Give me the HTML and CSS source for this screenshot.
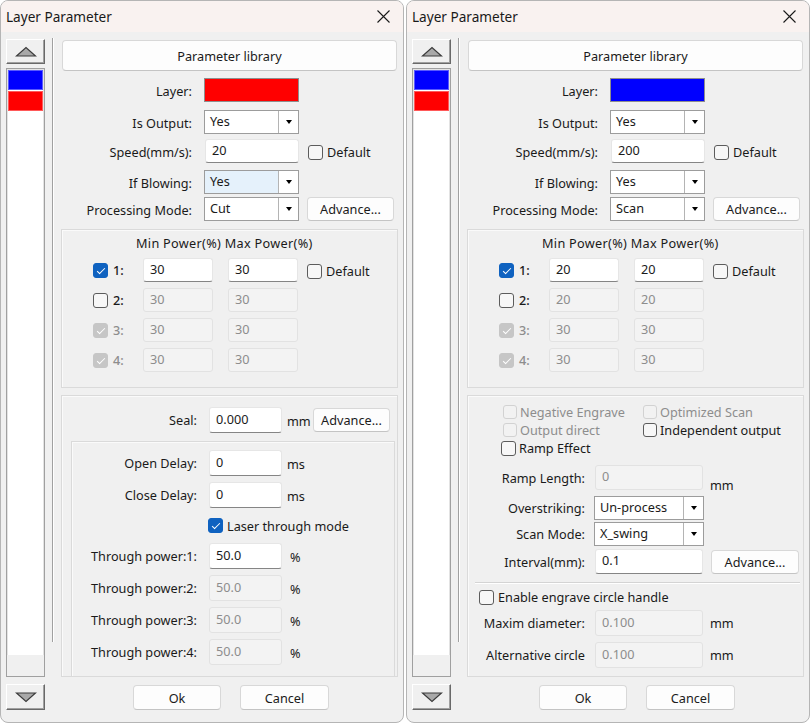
FILE: index.html
```html
<!DOCTYPE html>
<html>
<head>
  <title>Layer Parameter</title>
<link rel="stylesheet" href="styles.css"></head>
<body>
<div class="screen">

  <!-- Layer 2 : Cut -->
  <div class="window">
    <div class="titlebar">
      <span>Layer Parameter</span>
      <svg class="close" width="13" height="13" viewBox="0 0 13 13"><path d="M0.5 0.5L12.5 12.5M12.5 0.5L0.5 12.5" stroke="#1a1a1a" stroke-width="1.1"/></svg>
    </div>
    <div class="wbody">
      <div class="layers">
        <button class="arrow-btn"><svg width="22" height="11" viewBox="0 0 22 11"><polygon points="1.5,10 11,1.5 20.5,10" fill="#a9a9a9" stroke="#3c3c3c" stroke-width="1.2"/></svg></button>
        <div class="layer-list">
          <div class="layer-item blue"></div>
          <div class="layer-item red"></div>
          <div class="list-space"></div>
          <div class="list-foot"></div>
        </div>
        <button class="arrow-btn down"><svg width="22" height="11" viewBox="0 0 22 11"><polygon points="1.5,1 11,9.5 20.5,1" fill="#a9a9a9" stroke="#3c3c3c" stroke-width="1.2"/></svg></button>
      </div>
      <div class="splitter"></div>
      <div class="main">
        <button class="btn lib">Parameter library</button>
        <div class="form">
          <div class="row"><span class="lbl">Layer:</span><span class="swatch red"></span></div>
          <div class="row"><span class="lbl">Is Output:</span><div class="combo"><span class="val">Yes</span><span class="drop"></span></div></div>
          <div class="row"><span class="lbl">Speed(mm/s):</span><input class="field speed" value="20"><label class="check extra"><span class="cb"></span>Default</label></div>
          <div class="row"><span class="lbl">If Blowing:</span><div class="combo hot"><span class="val">Yes</span><span class="drop"></span></div></div>
          <div class="row"><span class="lbl">Processing Mode:</span><div class="combo"><span class="val">Cut</span><span class="drop"></span></div><button class="btn adv">Advance...</button></div>
        </div>

        <div class="group power">
          <div class="power-head">Min Power(%) Max Power(%)</div>
          <div class="power-row"><label class="check num"><span class="cb on"></span>1:</label><input class="field pw" value="30"><input class="field pw" value="30"><label class="check extra"><span class="cb"></span>Default</label></div>
          <div class="power-row"><label class="check num"><span class="cb"></span>2:</label><input class="field pw" value="30" disabled><input class="field pw" value="30" disabled></div>
          <div class="power-row"><label class="check num off"><span class="cb on"></span>3:</label><input class="field pw" value="30" disabled><input class="field pw" value="30" disabled></div>
          <div class="power-row"><label class="check num off"><span class="cb on"></span>4:</label><input class="field pw" value="30" disabled><input class="field pw" value="30" disabled></div>
        </div>

        <div class="group lower">
          <div class="seal-row"><span class="lbl">Seal:</span><input class="field" value="0.000"><span class="unit">mm</span><button class="btn adv2">Advance...</button></div>
          <div class="inner">
            <div class="drow"><span class="lbl">Open Delay:</span><input class="field" value="0"><span class="unit">ms</span></div>
            <div class="drow"><span class="lbl">Close Delay:</span><input class="field" value="0"><span class="unit">ms</span></div>
            <div class="drow cbrow"><label class="check"><span class="cb on"></span>Laser through mode</label></div>
            <div class="drow"><span class="lbl">Through power:1:</span><input class="field" value="50.0"><span class="unit pct">%</span></div>
            <div class="drow"><span class="lbl">Through power:2:</span><input class="field" value="50.0" disabled><span class="unit pct">%</span></div>
            <div class="drow"><span class="lbl">Through power:3:</span><input class="field" value="50.0" disabled><span class="unit pct">%</span></div>
            <div class="drow"><span class="lbl">Through power:4:</span><input class="field" value="50.0" disabled><span class="unit pct">%</span></div>
          </div>
        </div>

        <div class="footer"><button class="btn ok">Ok</button><button class="btn ok">Cancel</button></div>
      </div>
    </div>
  </div>

  <!-- Layer 1 : Scan -->
  <div class="window">
    <div class="titlebar">
      <span>Layer Parameter</span>
      <svg class="close" width="13" height="13" viewBox="0 0 13 13"><path d="M0.5 0.5L12.5 12.5M12.5 0.5L0.5 12.5" stroke="#1a1a1a" stroke-width="1.1"/></svg>
    </div>
    <div class="wbody">
      <div class="layers">
        <button class="arrow-btn"><svg width="22" height="11" viewBox="0 0 22 11"><polygon points="1.5,10 11,1.5 20.5,10" fill="#a9a9a9" stroke="#3c3c3c" stroke-width="1.2"/></svg></button>
        <div class="layer-list">
          <div class="layer-item blue"></div>
          <div class="layer-item red"></div>
          <div class="list-space"></div>
          <div class="list-foot"></div>
        </div>
        <button class="arrow-btn down"><svg width="22" height="11" viewBox="0 0 22 11"><polygon points="1.5,1 11,9.5 20.5,1" fill="#a9a9a9" stroke="#3c3c3c" stroke-width="1.2"/></svg></button>
      </div>
      <div class="splitter"></div>
      <div class="main">
        <button class="btn lib">Parameter library</button>
        <div class="form">
          <div class="row"><span class="lbl">Layer:</span><span class="swatch blue"></span></div>
          <div class="row"><span class="lbl">Is Output:</span><div class="combo"><span class="val">Yes</span><span class="drop"></span></div></div>
          <div class="row"><span class="lbl">Speed(mm/s):</span><input class="field speed" value="200"><label class="check extra"><span class="cb"></span>Default</label></div>
          <div class="row"><span class="lbl">If Blowing:</span><div class="combo"><span class="val">Yes</span><span class="drop"></span></div></div>
          <div class="row"><span class="lbl">Processing Mode:</span><div class="combo"><span class="val">Scan</span><span class="drop"></span></div><button class="btn adv">Advance...</button></div>
        </div>

        <div class="group power">
          <div class="power-head">Min Power(%) Max Power(%)</div>
          <div class="power-row"><label class="check num"><span class="cb on"></span>1:</label><input class="field pw" value="20"><input class="field pw" value="20"><label class="check extra"><span class="cb"></span>Default</label></div>
          <div class="power-row"><label class="check num"><span class="cb"></span>2:</label><input class="field pw" value="20" disabled><input class="field pw" value="20" disabled></div>
          <div class="power-row"><label class="check num off"><span class="cb on"></span>3:</label><input class="field pw" value="30" disabled><input class="field pw" value="30" disabled></div>
          <div class="power-row"><label class="check num off"><span class="cb on"></span>4:</label><input class="field pw" value="30" disabled><input class="field pw" value="30" disabled></div>
        </div>

        <div class="group lower">
          <div class="opts">
            <label class="check off"><span class="cb"></span>Negative Engrave</label>
            <label class="check off"><span class="cb"></span>Optimized Scan</label>
            <label class="check off"><span class="cb"></span>Output direct</label>
            <label class="check"><span class="cb"></span>Independent output</label>
            <label class="check ramp"><span class="cb"></span>Ramp Effect</label>
          </div>
          <div class="srow ramp-row"><span class="lbl">Ramp Length:</span><input class="field sf" value="0" disabled><span class="unit low">mm</span></div>
          <div class="srow combo-row"><span class="lbl">Overstriking:</span><div class="combo sc"><span class="val">Un-process</span><span class="drop"></span></div></div>
          <div class="srow combo-row tight"><span class="lbl">Scan Mode:</span><div class="combo sc"><span class="val">X_swing</span><span class="drop"></span></div></div>
          <div class="srow interval-row"><span class="lbl">Interval(mm):</span><input class="field sf" value="0.1"><button class="btn adv3">Advance...</button></div>
          <div class="sep"></div>
          <label class="check circle"><span class="cb"></span>Enable engrave circle handle</label>
          <div class="srow circle-row"><span class="lbl">Maxim diameter:</span><input class="field sf" value="0.100" disabled><span class="unit">mm</span></div>
          <div class="srow circle-row wide-gap"><span class="lbl">Alternative circle</span><input class="field sf" value="0.100" disabled><span class="unit">mm</span></div>
        </div>

        <div class="footer"><button class="btn ok">Ok</button><button class="btn ok">Cancel</button></div>
      </div>
    </div>
  </div>

</div>
</body>
</html>
```

FILE: styles.css
```css
* {
  box-sizing: border-box;
}

body {
  margin: 0;
  background: #fff;
  font-family: "Noto Sans", "Open Sans", sans-serif;
  font-size: 12.7px;
  color: #1a1a1a;
}

.screen {
  display: flex;
  gap: 2px;
  width: 811px;
  height: 725px;
}

.window {
  width: 404px;
  height: 723px;
  flex: none;
  display: flex;
  flex-direction: column;
  background: #f0f0f0;
  border: 1px solid #b5b5b5;
  border-radius: 8px;
  overflow: hidden;
}

.titlebar {
  height: 31px;
  flex: none;
  display: flex;
  align-items: center;
  justify-content: space-between;
  padding: 0 13px 0 5px;
  background: #f9f2f0;
  font-size: 13.6px;
}

.wbody {
  flex: 1;
  display: flex;
}

/* layer list column */
.layers {
  width: 39px;
  margin-left: 5px;
  padding-top: 7px;
  display: flex;
  flex-direction: column;
}

.arrow-btn {
  height: 25px;
  padding: 0;
  display: flex;
  align-items: center;
  justify-content: center;
  background: #f0f0f0;
  border: 1px solid;
  border-color: #fff #696969 #696969 #fff;
  box-shadow: inset -1px -1px 0 #a0a0a0;
}

.arrow-btn.down {
  height: 26px;
  margin-top: 7px;
}

.layer-list {
  height: 609px;
  margin-top: 4px;
  display: flex;
  flex-direction: column;
  background: #fff;
  border: 1px solid #a0a0a0;
  box-shadow: inset 1px 1px 0 #e3e3e3, inset -1px -1px 0 #e3e3e3;
  padding: 1px 1px 0 1px;
}

.layer-item {
  height: 20px;
  margin-bottom: 1px;
  border: 1px solid rgba(255, 255, 255, 0.35);
}

.layer-item.blue { background: #0000ff; }
.layer-item.red { background: #ff0000; }

.list-space {
  flex: 1;
}

.list-foot {
  height: 21px;
  margin: 0 -1px;
  background: #f0f0f0;
}

.splitter {
  width: 2px;
  height: 604px;
  margin: 6px 0 0 7px;
  border-left: 1px solid #a0a0a0;
  border-right: 1px solid #fff;
}

/* main column */
.main {
  width: 337px;
  margin-left: 7px;
  display: flex;
  flex-direction: column;
}

.btn {
  font: inherit;
  color: #1b1b1b;
  background: #fdfdfd;
  border: 1px solid #d8d8d8;
  border-bottom-color: #c4c4c4;
  border-radius: 4px;
  padding: 0;
}

.lib {
  height: 31px;
  margin: 8px 1px 0 1px;
}

.form {
  margin-top: 7px;
}

.row {
  display: flex;
  align-items: center;
  height: 24px;
}

.row:nth-child(1) { margin-bottom: 8px; }
.row:nth-child(2) { margin-bottom: 5px; }
.row:nth-child(3) { margin-bottom: 7px; }
.row:nth-child(4) { margin-bottom: 3px; }

.lbl {
  text-align: right;
  white-space: nowrap;
}

.row .lbl {
  width: 131px;
  margin-right: 12px;
  padding-top: 2px;
}

.swatch {
  width: 95px;
  height: 24px;
  border: 1px solid #8e8e8e;
}

.swatch.red { background: #ff0000; }
.swatch.blue { background: #0000ff; }

.combo {
  width: 95px;
  height: 24px;
  display: flex;
  background: #fff;
  border: 1px solid #9c9c9c;
}

.combo .val {
  flex: 1;
  padding-left: 5px;
  line-height: 21px;
}

.combo.hot .val {
  background: #e5f1fb;
}

.combo .drop {
  width: 20px;
  border-left: 1px solid #b4b4b4;
  display: flex;
  align-items: center;
  justify-content: center;
}

.combo .drop::after {
  content: "";
  border-top: 4px solid #000;
  border-left: 3.5px solid transparent;
  border-right: 3.5px solid transparent;
}

.field {
  width: 73px;
  height: 26px;
  font: inherit;
  color: #1b1b1b;
  background: #fff;
  border: 1px solid #e6e6e6;
  border-bottom-color: #858585;
  border-radius: 3px;
  padding: 0 6px 3px;
  outline: none;
}

.field:disabled {
  background: #f3f3f3;
  border-color: #e2e2e2;
  color: #8d8d8d;
}

.field.speed {
  width: 94px;
  height: 24px;
  margin-left: 1px;
}

.check {
  display: flex;
  align-items: center;
  white-space: nowrap;
}

.cb {
  position: relative;
  width: 15px;
  height: 15px;
  flex: none;
  margin-right: 4px;
  background: #f7f7f7;
  border: 1px solid #5c5c5c;
  border-radius: 3px;
}

.cb.on {
  background: #0f62c0;
  border-color: #0f62c0;
}

.cb.on::after {
  content: "";
  position: absolute;
  left: 4.5px;
  top: 2px;
  width: 3px;
  height: 7px;
  border: solid #fff;
  border-width: 0 1.2px 1.2px 0;
  transform: rotate(45deg);
}

.check.off {
  color: #8d8d8d;
}

.check.off .cb {
  background: #f2f2f2;
  border-color: #d2d2d2;
}

.check.off .cb.on {
  background: #c6c6c6;
  border-color: #c6c6c6;
}

.extra {
  margin-left: 9px;
  padding-top: 2px;
}

.adv {
  width: 87px;
  height: 24px;
  margin-left: 8px;
}

/* group boxes */
.group {
  border: 1px solid #dadada;
  box-shadow: inset 1px 1px 0 #fafafa;
}

.power {
  height: 159px;
  margin-top: 8px;
  padding: 5px 0 0 31px;
}

.power-head {
  line-height: 16px;
  margin: 0 0 7px 43px;
  letter-spacing: 0.3px;
}

.power-row {
  display: flex;
  align-items: center;
  height: 24px;
  margin-bottom: 6px;
}

.check.num {
  width: 50px;
  font-weight: 500;
}

.check.num .cb {
  margin-right: 5px;
}

.field.pw {
  width: 70px;
  height: 24px;
  margin-right: 15px;
}

.power-row .field.pw + .field.pw {
  margin-right: 0;
}

.lower {
  height: 282px;
  margin-top: 7px;
  display: flex;
  flex-direction: column;
}

.seal-row {
  display: flex;
  align-items: center;
  height: 26px;
  margin-top: 11px;
}

.seal-row .lbl {
  width: 135px;
  margin-right: 12px;
}

.unit {
  margin-left: 5px;
  padding-top: 2px;
}

.seal-row .unit {
  width: 20px;
}

.adv2 {
  width: 77px;
  height: 24px;
  margin-left: 6px;
}

.inner {
  flex: 1;
  margin: 8px 2px 0 9px;
  padding-top: 8px;
  border: 1px solid #dadada;
  border-bottom: none;
  box-shadow: inset 1px 1px 0 #fafafa;
}

.drow {
  display: flex;
  align-items: center;
  height: 26px;
  margin-bottom: 6px;
}

.drow .lbl {
  width: 125px;
  margin-right: 12px;
}

.drow.cbrow {
  height: 23px;
  padding-left: 136px;
}

.unit.pct {
  margin-left: 8px;
}

/* scan options */
.opts {
  display: grid;
  grid-template-columns: 140px auto;
  grid-auto-rows: 18px;
  padding: 7px 0 0 35px;
}

.opts .check {
  line-height: 18px;
}

.opts .cb {
  width: 14px;
  height: 14px;
  margin-right: 3px;
}

.check.ramp {
  margin-left: -2px;
}

.check.ramp .cb {
  width: 15px;
  height: 15px;
}

.srow {
  display: flex;
  align-items: center;
}

.srow .lbl {
  width: 117px;
  margin-right: 9px;
}

.field.sf {
  width: 108px;
  margin-left: 1px;
}

.ramp-row {
  height: 25px;
  margin-top: 8px;
}

.ramp-row .field {
  height: 25px;
}

.unit.low {
  align-self: flex-end;
  margin-left: 7px;
  margin-bottom: -4px;
}

.combo-row {
  height: 24px;
  margin-top: 6px;
}

.combo-row.tight {
  margin-top: 2px;
}

.combo.sc {
  width: 110px;
}

.interval-row {
  height: 25px;
  margin-top: 3px;
}

.interval-row .field {
  height: 25px;
}

.adv3 {
  width: 88px;
  height: 24px;
  margin-left: 8px;
}

.sep {
  height: 2px;
  margin: 8px 3px 0 7px;
  border-top: 1px solid #d4d4d4;
  border-bottom: 1px solid #fff;
}

.check.circle {
  height: 18px;
  margin: 4px 0 0 11px;
}

.circle-row {
  height: 26px;
  margin-top: 4px;
}

.circle-row.wide-gap {
  margin-top: 6px;
}

.circle-row .unit {
  margin-left: 7px;
  padding-top: 0;
}

/* dialog buttons */
.footer {
  display: flex;
  gap: 19px;
  margin-top: 8px;
  padding-left: 72px;
}

.ok {
  width: 88px;
  height: 25px;
}

.ok + .ok {
  width: 89px;
}
```
